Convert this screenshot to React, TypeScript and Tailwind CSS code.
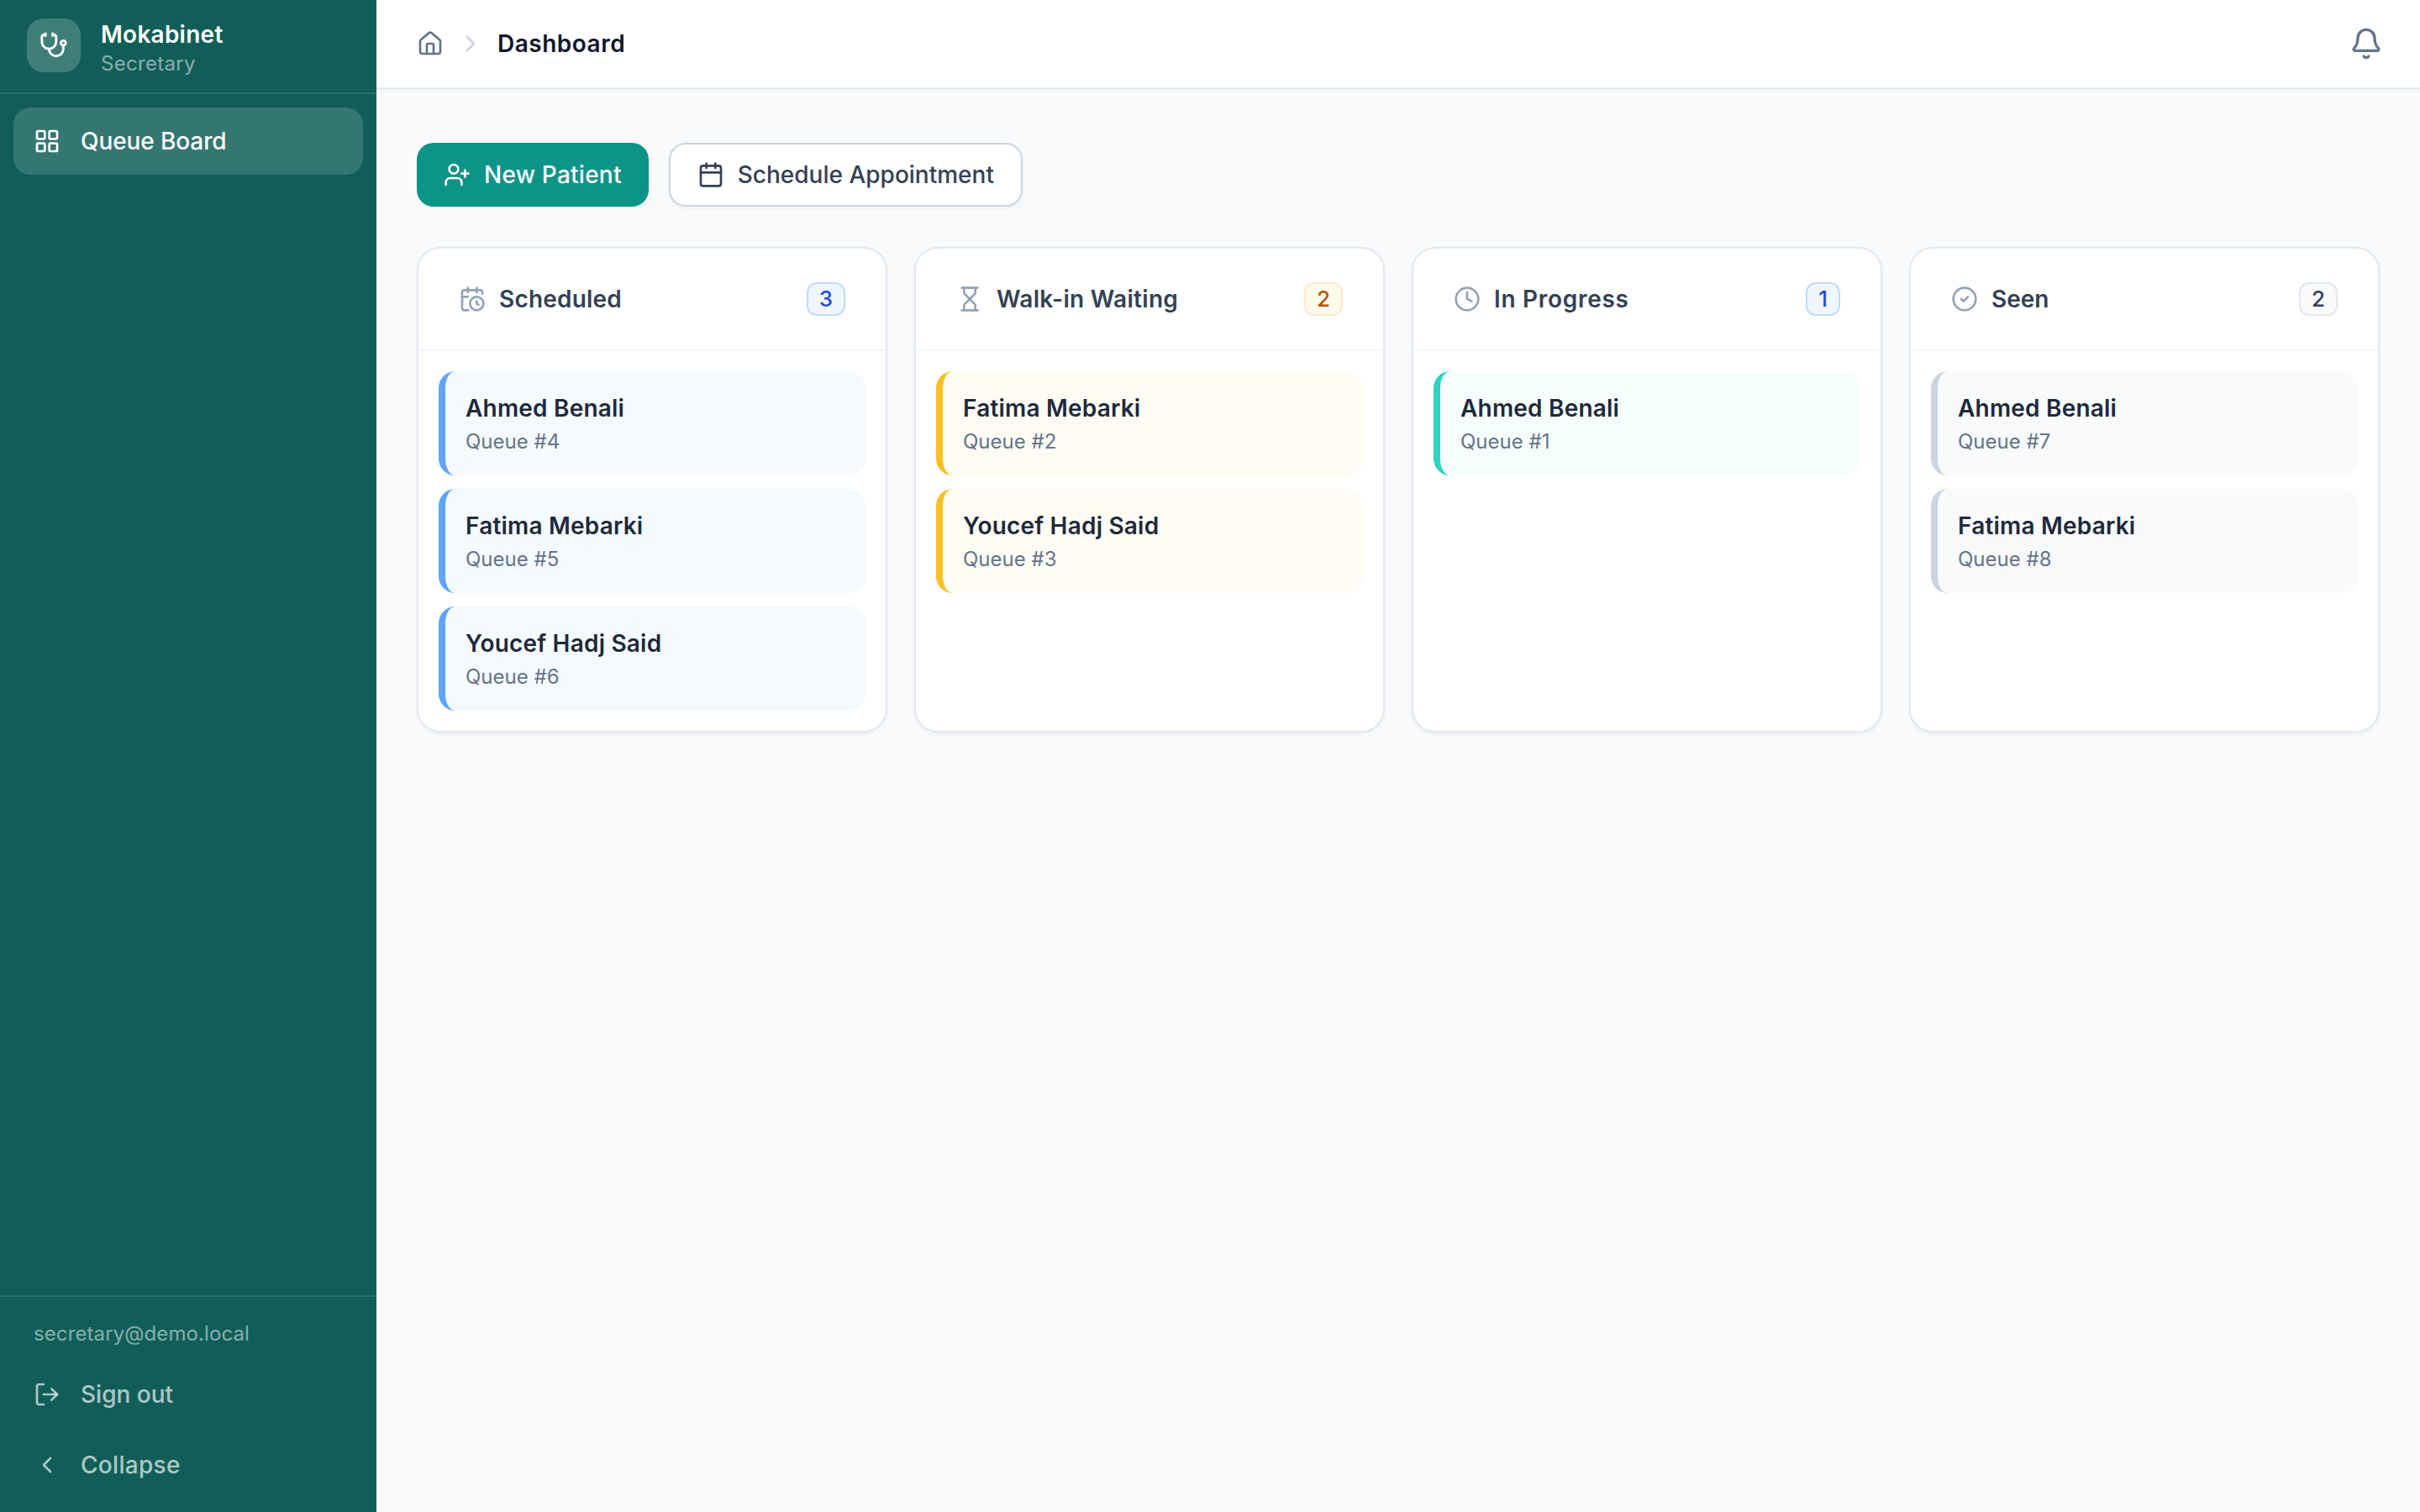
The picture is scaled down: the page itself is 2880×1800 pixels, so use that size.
import React from 'react';
import {
  Bell,
  CalendarClock,
  Calendar,
  ChevronLeft,
  ChevronRight,
  CircleCheck,
  Clock,
  Hourglass,
  House,
  LayoutGrid,
  LogOut,
  Stethoscope,
  UserPlus,
} from 'lucide-react';

const columns = [
  {
    title: 'Scheduled',
    icon: CalendarClock,
    tracking: 'tracking-[0.2px]',
    badge: 'bg-[#eff6ff] border-[#bfdbfe] text-[#1d4ed8]',
    item: 'bg-[#f5faff] border-l-[#60a5fa]',
    patients: [
      { name: 'Ahmed Benali', queue: 4 },
      { name: 'Fatima Mebarki', queue: 5 },
      { name: 'Youcef Hadj Said', queue: 6 },
    ],
  },
  {
    title: 'Walk-in Waiting',
    icon: Hourglass,
    tracking: 'tracking-[0.3px]',
    badge: 'bg-[#fffbeb] border-[#fde9c8] text-[#b45309]',
    item: 'bg-[#fffcf5] border-l-[#fbbf24]',
    patients: [
      { name: 'Fatima Mebarki', queue: 2 },
      { name: 'Youcef Hadj Said', queue: 3 },
    ],
  },
  {
    title: 'In Progress',
    icon: Clock,
    tracking: 'tracking-[0.7px]',
    badge: 'bg-[#eff6ff] border-[#bfdbfe] text-[#1d4ed8]',
    item: 'bg-[#f5fefc] border-l-[#2dd4bf]',
    patients: [{ name: 'Ahmed Benali', queue: 1 }],
  },
  {
    title: 'Seen',
    icon: CircleCheck,
    tracking: 'tracking-[0px]',
    badge: 'bg-[#f8fafc] border-[#e2e8f0] text-[#334155]',
    item: 'bg-[#f8fafc] border-l-[#cbd5e1]',
    patients: [
      { name: 'Ahmed Benali', queue: 7 },
      { name: 'Fatima Mebarki', queue: 8 },
    ],
  },
];

const App: React.FC = () => {
  return (
    <div className="flex h-[1800px] w-[2880px] overflow-hidden bg-[#f8fafc] [font-family:Inter,sans-serif]">
      {/* Sidebar */}
      <aside className="flex w-[448px] shrink-0 flex-col bg-[#115e59]">
        <div className="flex h-[112px] items-center gap-[24px] border-b-2 border-white/10 pb-[2px] pl-[32px]">
          <div className="flex h-[64px] w-[64px] items-center justify-center rounded-[20px] bg-white/20 text-white">
            <Stethoscope className="h-[34px] w-[34px]" />
          </div>
          <div className="pt-[5px]">
            <div className="text-[28px] leading-[38px] font-semibold tracking-[0.25px] text-white">Mokabinet</div>
            <div className="text-[24px] leading-[32px] tracking-[0.3px] text-white/50">Secretary</div>
          </div>
        </div>

        <nav className="flex-1 p-[16px]">
          <button className="flex h-[80px] w-full items-center gap-[24px] rounded-[20px] bg-white/15 px-[24px] text-[28px] font-medium tracking-[-0.1px] text-white">
            <LayoutGrid className="h-[32px] w-[32px]" />
            <span>Queue Board</span>
          </button>
        </nav>

        <div className="border-t-2 border-white/10 px-[16px] pt-[24px] pb-[16px]">
          <div className="mb-[12px] px-[24px] text-[24px] leading-[40px] tracking-[0.1px] text-white/50">secretary@demo.local</div>
          <div className="flex flex-col gap-[4px] text-[28px] font-medium text-white/65">
            <button className="flex h-[80px] items-center gap-[24px] px-[24px]">
              <LogOut className="h-[32px] w-[32px]" />
              <span>Sign out</span>
            </button>
            <button className="flex h-[80px] items-center gap-[24px] px-[24px]">
              <ChevronLeft className="h-[32px] w-[32px]" />
              <span className="tracking-[0.3px]">Collapse</span>
            </button>
          </div>
        </div>
      </aside>

      <div className="flex min-w-0 flex-1 flex-col">
        {/* Top bar */}
        <header className="flex h-[106px] items-center justify-between border-b-2 border-[#e2e8f0] bg-white pr-[44px] pl-[48px] shadow-[0_2px_4px_rgba(0,0,0,0.04)]">
          <div className="flex items-center gap-[16px]">
            <House className="h-[32px] w-[32px] text-[#64748b]" />
            <ChevronRight className="h-[32px] w-[32px] text-[#cbd5e1]" />
            <span className="text-[28px] font-semibold tracking-[0.5px] text-[#0f172a]">Dashboard</span>
          </div>
          <Bell className="h-[40px] w-[40px] text-[#64748b]" />
        </header>

        <main className="flex-1 px-[48px] pt-[64px]">
          <div className="mb-[48px] flex gap-[24px]">
            <button className="flex h-[76px] items-center gap-[16px] rounded-[20px] bg-[#0d9488] px-[32px] text-[28px] font-medium tracking-[0.25px] text-white">
              <UserPlus className="h-[32px] w-[32px]" />
              New Patient
            </button>
            <button className="flex h-[76px] items-center gap-[16px] rounded-[20px] border-2 border-[#cbd5e1] bg-white px-[32px] text-[28px] font-medium text-[#334155] shadow-[0_2px_4px_rgba(0,0,0,0.05)]">
              <Calendar className="h-[32px] w-[32px]" />
              Schedule Appointment
            </button>
          </div>

          <div className="grid grid-cols-4 gap-[32px]">
            {columns.map((col) => {
              const Icon = col.icon;
              return (
                <section
                  key={col.title}
                  className="flex h-[578px] flex-col rounded-[28px] border-2 border-[#e2e8f0] bg-white shadow-[0_2px_4px_rgba(0,0,0,0.05)]"
                >
                  <div className="flex h-[122px] items-center justify-between border-b-2 border-[#f1f5f9] px-[48px]">
                    <div className="flex items-center gap-[16px]">
                      <Icon className="h-[32px] w-[32px] text-[#94a3b8]" />
                      <h3 className={`text-[28px] font-semibold text-[#334155] ${col.tracking}`}>{col.title}</h3>
                    </div>
                    <span className={`rounded-[12px] border-2 px-[13px] text-[26px] leading-[36px] font-medium ${col.badge}`}>
                      {col.patients.length}
                    </span>
                  </div>
                  <div className="flex flex-col gap-[16px] p-[24px]">
                    {col.patients.map((p) => (
                      <div
                        key={p.queue}
                        className={`flex h-[124px] flex-col justify-center rounded-[20px] border-l-[8px] pl-[24px] ${col.item}`}
                      >
                        <div className="text-[28px] leading-[44px] font-semibold tracking-[0.2px] text-[#1e293b]">{p.name}</div>
                        <div className="text-[24px] leading-[36px] text-[#64748b]">Queue #{p.queue}</div>
                      </div>
                    ))}
                  </div>
                </section>
              );
            })}
          </div>
        </main>
      </div>
    </div>
  );
};

export default App;
